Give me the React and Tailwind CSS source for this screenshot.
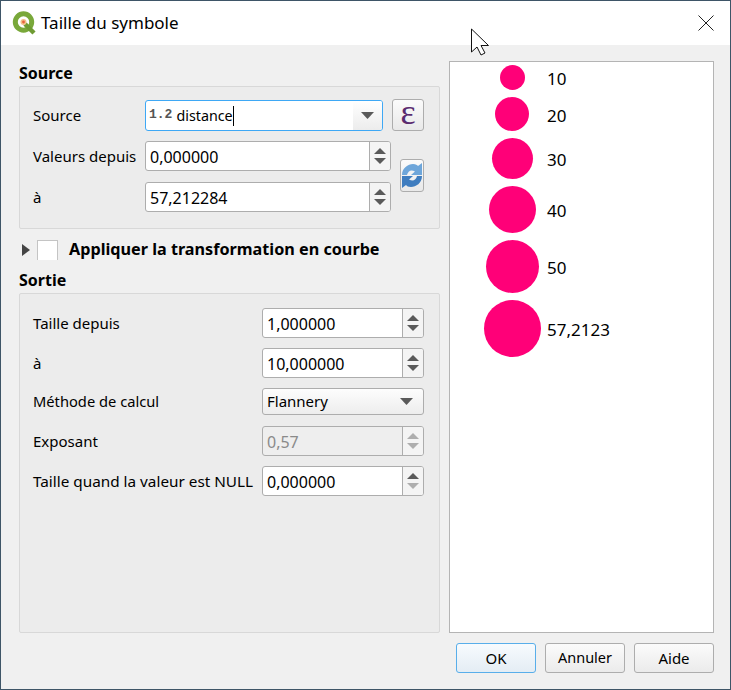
import React from "react";

const Up = ({ dim }) => (
  <svg width="12" height="6" viewBox="0 0 12 6" className="block"><path d="M6 0 L12 6 L0 6 Z" fill={dim ? "#aeaeae" : "#5a5a5a"} /></svg>
);
const Down = ({ dim }) => (
  <svg width="12" height="6" viewBox="0 0 12 6" className="block"><path d="M0 0 L12 0 L6 6 Z" fill={dim ? "#aeaeae" : "#5a5a5a"} /></svg>
);

function Spin({ value, className, disabled, downDim, upDim }) {
  return (
    <div className={`flex h-[30px] rounded-[3px] border border-[#adadad] overflow-hidden ${disabled ? "bg-[#eeeeee] text-[#8a8a8a]" : "bg-white text-black"} ${className}`}>
      <div className="flex-1 pl-[4px] pt-[1px] flex items-center leading-none text-[16px]">{value}</div>
      <div className="w-[21px] border-l border-[#adadad] bg-[#f4f4f4] flex flex-col items-center justify-center gap-[4px]">
        <Up dim={disabled || upDim} />
        <Down dim={disabled || downDim} />
      </div>
    </div>
  );
}

function QgisLogo() {
  return (
    <svg width="25" height="24" viewBox="0 0 25 24" className="block">
      <circle cx="11.5" cy="11" r="8.2" fill="#fff" stroke="#79a83a" strokeWidth="5" />
      <path d="M13 13 L22 22" stroke="#6f9b33" strokeWidth="4.5" />
      <circle cx="11.5" cy="11" r="3" fill="#f3c08a" />
      <circle cx="11.5" cy="11" r="1.4" fill="#e8603c" />
    </svg>
  );
}

function Refresh() {
  return (
    <svg width="22" height="27" viewBox="0 0 22 27" className="block">
      <path d="M1 13 C1 6 7 2 12 2 C15 2 16 3 17 4 L21 1 L21 13 L10 13 L14 9.5 C10 7 7 9 6 13 Z" fill="#6ea6da" />
      <path d="M21 14 C21 21 15 25 10 25 C7 25 6 24 5 23 L1 26 L1 14 L12 14 L8 17.5 C12 20 15 18 16 14 Z" fill="#3f7dbf" />
    </svg>
  );
}

const Legend = ({ d, label }) => (
  <div className="flex items-center pl-[27px]">
    <div className="w-[70px] flex justify-center">
      <div className="rounded-full bg-[#ff0078]" style={{ width: d, height: d }} />
    </div>
    <span className="text-[17px] leading-none text-black mt-[2px]">{label}</span>
  </div>
);

export default function App() {
  return (
    <div className="relative w-[731px] h-[690px] flex flex-col border border-[#3e5567] bg-[#f0f0f0] text-[15px] text-black overflow-hidden" style={{ fontFamily: '"Noto Sans", sans-serif' }}>
      <div className="h-[44px] shrink-0 bg-white flex items-center pl-[11px] pr-[16px]">
        <QgisLogo />
        <span className="ml-[4px] text-[17px]">Taille du symbole</span>
        <svg width="16" height="16" viewBox="0 0 16 16" className="ml-auto block">
          <path d="M0.5 0.5 L15.5 15.5 M15.5 0.5 L0.5 15.5" stroke="#222" strokeWidth="1" />
        </svg>
      </div>

      <div className="flex-1 flex flex-col px-[16px] pb-[16px]">
        <div className="flex flex-1 gap-[9px] pl-[2px]">
          <div className="w-[421px] flex flex-col">
            <div className="h-[41px] flex items-end font-bold leading-none pb-[5px] text-[16px]">Source</div>
            <div className="h-[143px] rounded-[2px] border border-[#d8d8d8] bg-[#ececec] pl-[13px] pr-[15px] pt-[12px]">
              <div className="flex items-center h-[32px]">
                <span className="w-[112px]">Source</span>
                <div className="relative w-[238px] h-[31px] rounded-[3px] border border-[#3ea8f5] bg-white flex items-center overflow-hidden">
                  <span className="ml-[3px] text-[13px] font-bold text-[#555]" style={{ fontFamily: '"Liberation Mono", monospace' }}>1.2</span>
                  <span className="ml-[4px] mt-[2px] border-r border-black leading-[20px] text-[14.3px]">distance</span>
                  <div className="ml-auto w-[29px] h-full bg-gradient-to-b from-[#ffffff] to-[#ececec] flex items-center justify-center">
                    <svg width="13" height="7" viewBox="0 0 13 7" className="block"><path d="M0 0 L13 0 L6.5 7 Z" fill="#5a5a5a" /></svg>
                  </div>
                </div>
                <div className="ml-[9px] w-[32px] h-[32px] rounded-[3px] border border-[#adadad] bg-gradient-to-b from-[#fbfbfb] to-[#e9e9e9] flex items-center justify-center text-[#5b2c70] text-[36px] leading-none pb-[6px]" style={{ fontFamily: '"Liberation Serif", serif' }}>ε</div>
              </div>
              <div className="flex mt-[10px]">
                <div className="flex flex-col gap-[11px]">
                  <div className="flex items-center">
                    <span className="w-[112px]">Valeurs depuis</span>
                    <Spin value="0,000000" className="w-[246px]" />
                  </div>
                  <div className="flex items-center">
                    <span className="w-[112px]">à</span>
                    <Spin value="57,212284" className="w-[246px]" />
                  </div>
                </div>
                <div className="ml-[9px] mt-[18px] w-[24px] h-[33px] rounded-[3px] border border-[#adadad] bg-gradient-to-b from-[#fbfbfb] to-[#e9e9e9] flex items-center justify-center">
                  <Refresh />
                </div>
              </div>
            </div>
            <div className="h-[40px] flex items-center">
              <svg width="8" height="12" viewBox="0 0 8 12" className="block ml-[3px] mt-[2px]"><path d="M0 0 L8 6 L0 12 Z" fill="#444" /></svg>
              <div className="ml-[7px] mt-[1px] w-[21px] h-[20px] border border-b-0 border-[#c4c4c4] bg-white" />
              <span className="ml-[11px] mt-[1px] font-bold text-[16.2px]">Appliquer la transformation en courbe</span>
            </div>
            <div className="h-[24px] font-bold leading-none flex items-start pt-[3px] text-[16px]">Sortie</div>
            <div className="flex-1 rounded-[2px] border border-[#d8d8d8] bg-[#ececec] pl-[13px] pr-[15px] pt-[14px] flex flex-col">
              <div className="flex items-center justify-between"><span>Taille depuis</span><Spin value="1,000000" className="w-[162px]" /></div>
              <div className="flex items-center justify-between mt-[10px]"><span>à</span><Spin value="10,000000" className="w-[162px]" /></div>
              <div className="flex items-center justify-between mt-[10px]">
                <span className="text-[14.7px]">Méthode de calcul</span>
                <div className="w-[162px] h-[27px] rounded-[3px] border border-[#adadad] bg-gradient-to-b from-[#fdfdfd] to-[#ededed] flex items-center pl-[4px] pr-[10px] justify-between">
                  <span>Flannery</span>
                  <svg width="13" height="7" viewBox="0 0 13 7" className="block"><path d="M0 0 L13 0 L6.5 7 Z" fill="#5a5a5a" /></svg>
                </div>
              </div>
              <div className="flex items-center justify-between mt-[11px]"><span>Exposant</span><Spin value="0,57" disabled className="w-[162px]" /></div>
              <div className="flex items-center justify-between mt-[10px]"><span className="text-[15.3px]">Taille quand la valeur est NULL</span><Spin value="0,000000" downDim className="w-[162px]" /></div>
            </div>
          </div>

          <div className="w-[265px] mt-[16px] bg-white border border-[#b4b4b4] pt-[3px] flex flex-col gap-[7px]">
            <Legend d={25} label="10" />
            <Legend d={34} label="20" />
            <Legend d={41} label="30" />
            <Legend d={47} label="40" />
            <Legend d={53} label="50" />
            <Legend d={57} label="57,2123" />
          </div>
        </div>

        <div className="h-[30px] mt-[10px] flex justify-end gap-[9px]">
          <div className="w-[80px] rounded-[3px] border border-[#58aeea] bg-gradient-to-b from-[#f7fbfe] to-[#e4edf4] flex items-center justify-center">OK</div>
          <div className="w-[80px] rounded-[3px] border border-[#adadad] bg-gradient-to-b from-[#fbfbfb] to-[#ebebeb] flex items-center justify-center text-[14.5px]">Annuler</div>
          <div className="w-[80px] rounded-[3px] border border-[#adadad] bg-gradient-to-b from-[#fbfbfb] to-[#ebebeb] flex items-center justify-center">Aide</div>
        </div>
      </div>

      <svg width="20" height="28" viewBox="0 0 20 28" className="absolute left-[469px] top-[27px]">
        <path d="M1.5 1 L1.5 24 L7 19 L11 27 L15 25 L11 17.5 L18.5 17.5 Z" fill="#fff" stroke="#111" strokeWidth="1" strokeLinejoin="round" />
      </svg>
    </div>
  );
}
